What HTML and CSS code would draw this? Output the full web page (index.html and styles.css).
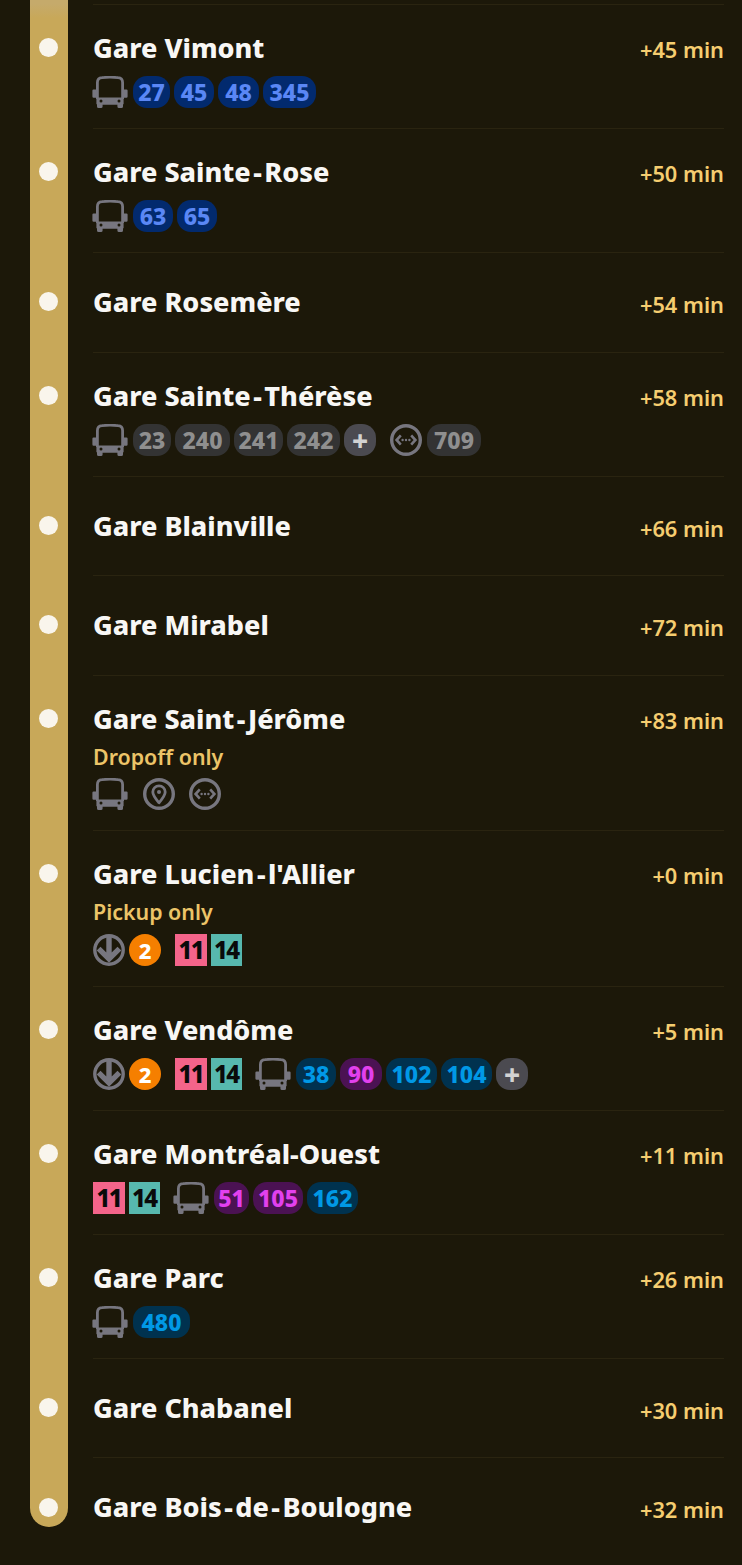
FILE: index.html
```html
<!DOCTYPE html>
<html lang="en">
<head>
<meta charset="utf-8">
<title>Stops</title>
<link rel="stylesheet" href="styles.css">
</head>
<body>
<svg class="defs" width="0" height="0" aria-hidden="true">
  <defs>
    <symbol id="bus" viewBox="0 0 36 32">
      <path fill="none" stroke="#77767f" stroke-width="2.8" d="M5.4 23V6.5C5.4 3.4 7 1.9 10 1.7 14 1.2 22 1.2 26 1.7 29 1.9 30.6 3.4 30.6 6.5V23"/>
      <path fill="#77767f" d="M4.4 21.6h27.2v5.6a1.6 1.6 0 0 1-1.6 1.6H6a1.6 1.6 0 0 1-1.6-1.6z"/>
      <path fill="#77767f" d="M5 28h5.6v2.4A1.6 1.6 0 0 1 9 32H6.6A1.6 1.6 0 0 1 5 30.4zM25.4 28H31v2.4a1.6 1.6 0 0 1-1.6 1.6H27a1.6 1.6 0 0 1-1.6-1.6z"/>
      <path fill="#77767f" d="M.4 14.6a1.2 1.2 0 0 1 1.2-1.2H4.4v8.4H1.6a1.2 1.2 0 0 1-1.2-1.2zM35.6 14.6a1.2 1.2 0 0 0-1.2-1.2H31.6v8.4h2.8a1.2 1.2 0 0 0 1.2-1.2z"/>
      <circle cx="9" cy="25" r="1.5" fill="#1c1809"/><circle cx="27" cy="25" r="1.5" fill="#1c1809"/>
    </symbol>
    <symbol id="metro" viewBox="0 0 32 32">
      <circle cx="16" cy="16" r="14.2" fill="none" stroke="#77767f" stroke-width="3.4"/>
      <path fill="none" stroke="#77767f" stroke-width="5.4" d="M16 3V25M5.6 14.6 16 25l10.4-10.4"/>
    </symbol>
    <symbol id="pin" viewBox="0 0 32 32">
      <circle cx="16" cy="16" r="14.3" fill="none" stroke="#77767f" stroke-width="3.4"/>
      <path fill="none" stroke="#77767f" stroke-width="2.8" stroke-linejoin="round" d="M16 24.8c-3.4-4-6.2-7.3-6.2-10.8a6.2 6.2 0 0 1 12.4 0c0 3.5-2.8 6.8-6.2 10.8z"/>
      <circle cx="16" cy="14" r="2" fill="#77767f"/>
    </symbol>
    <symbol id="link" viewBox="0 0 32 32">
      <circle cx="16" cy="16" r="14.3" fill="none" stroke="#77767f" stroke-width="3.4"/>
      <path fill="none" stroke="#77767f" stroke-width="2.6" d="M10.8 11.4 6.6 16l4.2 4.6M21.2 11.4l4.2 4.6-4.2 4.6"/>
      <circle cx="12.6" cy="16" r="1.2" fill="#77767f"/><circle cx="16" cy="16" r="1.2" fill="#77767f"/><circle cx="19.4" cy="16" r="1.2" fill="#77767f"/>
    </symbol>
  </defs>
</svg>
<main class="line">
  <div class="row stub"><div class="rail"></div></div>

  <section class="row">
    <div class="rail"><span class="dot"></span></div>
    <div class="stop">
      <div class="info">
        <h2 class="name">Gare Vimont</h2>
        <div class="modes">
          <div class="group"><svg class="ic-bus"><use href="#bus"/></svg><span class="chip navy w37">27</span><span class="chip navy w40">45</span><span class="chip navy w41">48</span><span class="chip navy w53">345</span></div>
        </div>
      </div>
      <span class="time">+45 min</span>
    </div>
  </section>

  <section class="row">
    <div class="rail"><span class="dot"></span></div>
    <div class="stop">
      <div class="info">
        <h2 class="name">Gare Sainte<span class="hy">-</span>Rose</h2>
        <div class="modes">
          <div class="group"><svg class="ic-bus"><use href="#bus"/></svg><span class="chip navy w40">63</span><span class="chip navy w40">65</span></div>
        </div>
      </div>
      <span class="time">+50 min</span>
    </div>
  </section>

  <section class="row plain">
    <div class="rail"><span class="dot"></span></div>
    <div class="stop">
      <div class="info"><h2 class="name">Gare Rosemère</h2></div>
      <span class="time">+54 min</span>
    </div>
  </section>

  <section class="row">
    <div class="rail"><span class="dot"></span></div>
    <div class="stop">
      <div class="info">
        <h2 class="name">Gare Sainte<span class="hy">-</span>Thérèse</h2>
        <div class="modes">
          <div class="group"><svg class="ic-bus"><use href="#bus"/></svg><span class="chip grey w38">23</span><span class="chip grey w55">240</span><span class="chip grey w49">241</span><span class="chip grey w53">242</span><span class="chip more">+</span></div>
          <div class="group"><svg class="ic"><use href="#link"/></svg><span class="chip grey w54">709</span></div>
        </div>
      </div>
      <span class="time">+58 min</span>
    </div>
  </section>

  <section class="row plain">
    <div class="rail"><span class="dot"></span></div>
    <div class="stop">
      <div class="info"><h2 class="name">Gare Blainville</h2></div>
      <span class="time">+66 min</span>
    </div>
  </section>

  <section class="row plain">
    <div class="rail"><span class="dot"></span></div>
    <div class="stop">
      <div class="info"><h2 class="name">Gare Mirabel</h2></div>
      <span class="time">+72 min</span>
    </div>
  </section>

  <section class="row">
    <div class="rail"><span class="dot"></span></div>
    <div class="stop">
      <div class="info">
        <h2 class="name">Gare Saint<span class="hy">-</span>Jérôme</h2>
        <p class="note">Dropoff only</p>
        <div class="modes after-note">
          <div class="group"><svg class="ic-bus"><use href="#bus"/></svg></div>
          <div class="group"><svg class="ic"><use href="#pin"/></svg></div>
          <div class="group"><svg class="ic"><use href="#link"/></svg></div>
        </div>
      </div>
      <span class="time">+83 min</span>
    </div>
  </section>

  <section class="row">
    <div class="rail"><span class="dot"></span></div>
    <div class="stop">
      <div class="info">
        <h2 class="name">Gare Lucien<span class="hy">-</span>l'Allier</h2>
        <p class="note">Pickup only</p>
        <div class="modes after-note">
          <div class="group"><svg class="ic"><use href="#metro"/></svg><span class="round">2</span></div>
          <div class="group"><span class="square pink">11</span><span class="square teal">14</span></div>
        </div>
      </div>
      <span class="time">+0 min</span>
    </div>
  </section>

  <section class="row">
    <div class="rail"><span class="dot"></span></div>
    <div class="stop">
      <div class="info">
        <h2 class="name">Gare Vendôme</h2>
        <div class="modes">
          <div class="group"><svg class="ic"><use href="#metro"/></svg><span class="round">2</span></div>
          <div class="group"><span class="square pink">11</span><span class="square teal">14</span></div>
          <div class="group"><svg class="ic-bus"><use href="#bus"/></svg><span class="chip blue w40">38</span><span class="chip purple w42">90</span><span class="chip blue w51">102</span><span class="chip blue w51">104</span><span class="chip more">+</span></div>
        </div>
      </div>
      <span class="time">+5 min</span>
    </div>
  </section>

  <section class="row">
    <div class="rail"><span class="dot"></span></div>
    <div class="stop">
      <div class="info">
        <h2 class="name">Gare Montréal-Ouest</h2>
        <div class="modes">
          <div class="group"><span class="square pink">11</span><span class="square teal">14</span></div>
          <div class="group"><svg class="ic-bus"><use href="#bus"/></svg><span class="chip purple w35">51</span><span class="chip purple w50">105</span><span class="chip blue w51">162</span></div>
        </div>
      </div>
      <span class="time">+11 min</span>
    </div>
  </section>

  <section class="row">
    <div class="rail"><span class="dot"></span></div>
    <div class="stop">
      <div class="info">
        <h2 class="name">Gare Parc</h2>
        <div class="modes">
          <div class="group"><svg class="ic-bus"><use href="#bus"/></svg><span class="chip blue w57">480</span></div>
        </div>
      </div>
      <span class="time">+26 min</span>
    </div>
  </section>

  <section class="row plain">
    <div class="rail"><span class="dot"></span></div>
    <div class="stop">
      <div class="info"><h2 class="name">Gare Chabanel</h2></div>
      <span class="time">+30 min</span>
    </div>
  </section>

  <section class="row plain last">
    <div class="rail"><span class="dot"></span></div>
    <div class="stop">
      <div class="info"><h2 class="name">Gare Bois<span class="hy">-</span>de<span class="hy">-</span>Boulogne</h2></div>
      <span class="time">+32 min</span>
    </div>
  </section>
</main>
</body>
</html>
```
FILE: styles.css
```css
html, body {
  margin: 0;
  padding: 0;
  background: #1c1809;
}
body {
  height: 1565px;
  overflow: hidden;
  font-family: "Noto Sans", sans-serif;
  color: #f8f7f5;
}
.defs { position: absolute; }
.line { padding: 0 18px 0 30px; }
.row { display: flex; gap: 25px; }
.stub { height: 4px; }
.rail {
  flex: 0 0 38px;
  width: 38px;
  display: flex;
  justify-content: center;
  align-items: flex-start;
  background: #c8a859;
}
.stub .rail { background: #c5aa6b; }
.stub + .row .rail { background: linear-gradient(#c5aa6b, #c8a859 14px); }
.dot {
  width: 19px;
  height: 19px;
  margin: 34px 1px 0 0;
  border-radius: 50%;
  background: #f9f5ec;
}
.plain .rail { align-items: center; }
.plain .dot { margin-top: 0; }
.last .rail {
  height: 70px;
  align-self: flex-start;
  align-items: flex-start;
  border-radius: 0 0 19px 19px;
}
.last .dot { margin-top: 40.5px; }
.stop {
  flex: 1;
  min-width: 0;
  min-height: 98.5px;
  display: flex;
  justify-content: space-between;
  align-items: flex-start;
  border-top: 1px solid #2a2410;
  padding: 25px 0 20px;
  box-sizing: border-box;
}
.plain .stop { align-items: center; padding: 0; min-height: 99.5px; }
.name {
  margin: 0;
  font-size: 27px;
  font-weight: 800;
  line-height: 36px;
  color: #f8f7f5;
  white-space: nowrap;
}
.hy { margin: 0 2.5px; }
.time {
  font-size: 21.8px;
  font-weight: 600;
  line-height: 36px;
  margin-top: 2px;
  color: #f5cd70;
  white-space: nowrap;
}
.plain .time { margin-top: 6px; }
.note {
  margin: 5px 0 0;
  font-size: 21.4px;
  font-weight: 600;
  line-height: 30px;
  color: #ecc468;
}
.modes { display: flex; gap: 14px; margin-top: 10px; height: 32px; }
.modes.after-note { margin-top: 6.5px; }
.group { display: flex; align-items: center; gap: 4px; }
.ic-bus { width: 36px; height: 32px; margin: 0 1px 0 -1px; }
.ic { width: 32px; height: 32px; }
.ic + .chip { margin-left: 1px; }
.chip {
  height: 32px;
  border-radius: 14px;
  font-size: 23px;
  font-weight: 800;
  line-height: 32px;
  text-align: center;
}
.w35 { width: 35px; }
.w37 { width: 37px; }
.w38 { width: 38px; }
.w40 { width: 40px; }
.w41 { width: 41px; }
.w42 { width: 42px; }
.w49 { width: 49px; }
.w50 { width: 50px; }
.w51 { width: 51px; }
.w53 { width: 53px; }
.w54 { width: 54px; }
.w55 { width: 55px; }
.w57 { width: 57px; }
.navy { background: #022a6e; color: #5a87f5; }
.grey { background: #333333; color: #8f8f8f; }
.blue { background: #00324f; color: #0099e6; }
.purple { background: #4b1253; color: #e240ee; }
.more { background: #4b4a50; color: #d2d2d2; width: 32px; font-size: 28px; }
.round {
  width: 32px;
  height: 32px;
  border-radius: 50%;
  background: #f57f00;
  color: #fff;
  font-size: 22px;
  font-weight: 800;
  line-height: 32px;
  text-align: center;
}
.square {
  width: 31.5px;
  height: 32px;
  font-size: 24px;
  font-weight: 800;
  line-height: 32px;
  text-align: center;
  letter-spacing: -1.5px;
  color: #0a0a0a;
}
.pink { background: #f4648a; }
.teal { background: #57b8ae; }
```
